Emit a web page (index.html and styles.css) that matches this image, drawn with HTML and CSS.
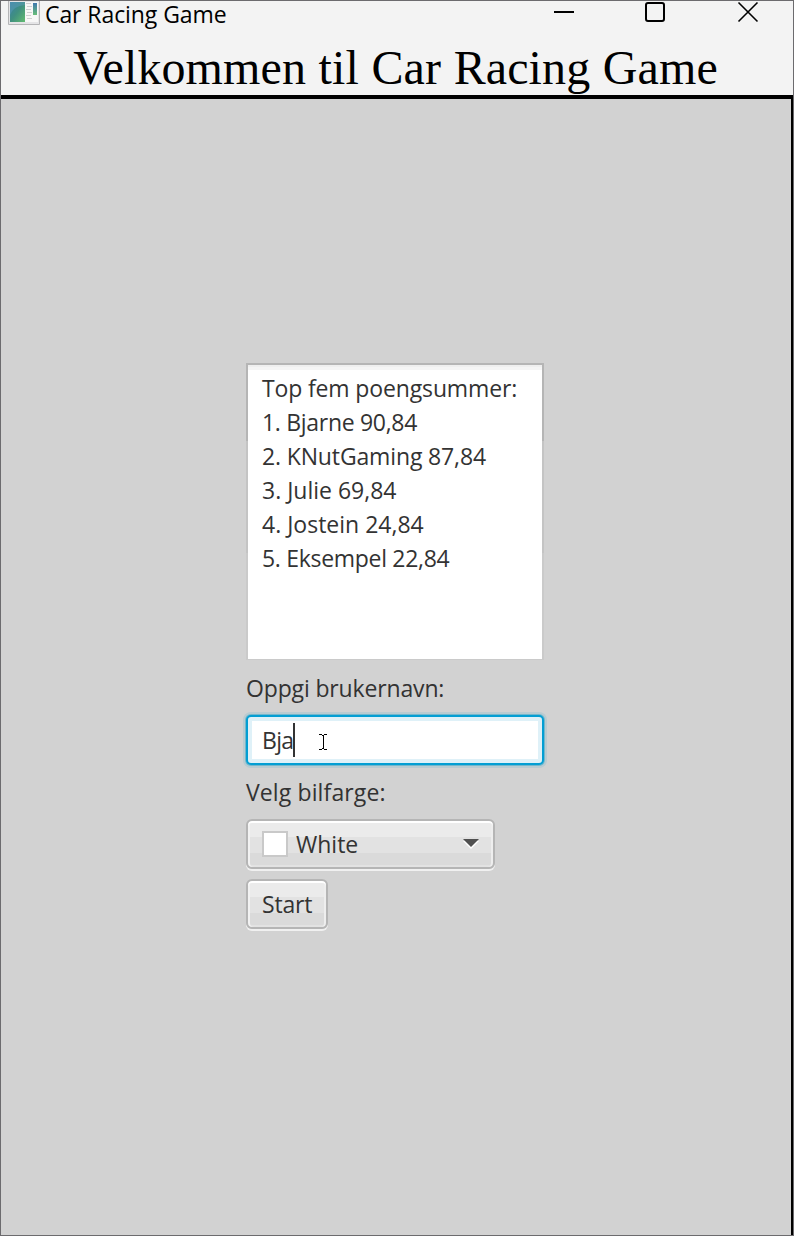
FILE: index.html
```html
<!DOCTYPE html>
<html lang="no">
<head>
<meta charset="utf-8">
<title>Car Racing Game</title>
<link rel="stylesheet" href="styles.css">
</head>
<body>
<div class="window">
  <header class="titlebar">
    <svg class="app-icon" width="32" height="25" viewBox="0 0 32 25">
      <defs>
        <linearGradient id="pane" x1="0" y1="0" x2="1" y2="1"><stop offset="0" stop-color="#397fa9"/><stop offset=".5" stop-color="#409080"/><stop offset="1" stop-color="#62bb70"/></linearGradient>
        <linearGradient id="strip" x1="0" y1="0" x2="0" y2="1"><stop offset="0" stop-color="#4078ae"/><stop offset="1" stop-color="#68bd78"/></linearGradient>
      </defs>
      <path d="M.5 0V23.500H31.500V0" fill="#e4e4e6" stroke="#b4b4b6"/>
      <rect x="2" y="1" width="15" height="20" fill="url(#pane)"/>
      <path d="M2 14Q5 5 17 4V1H2Z" fill="#5b9bb4" opacity=".55"/>
      <rect x="17" y="1" width="13" height="20" fill="#f7f7f7"/>
      <path d="M18 2.500h5M19 5.500h5M18 8.500h5M19 11.500h5M18 14.500h5M19 17.500h5" stroke="#cfcfd1"/>
      <rect x="25" y="2" width="4" height="12" fill="url(#strip)"/>
    </svg>
    <span class="caption">Car Racing Game</span>
    <svg class="controls" width="206" height="25" viewBox="0 0 206 25" fill="none" stroke="#000" stroke-width="2">
      <path d="M1 11H21"/>
      <rect x="93" y="2" width="18" height="18" rx="2"/>
      <path d="M185.500 1.500L204.500 20.500M204.500 1.500L185.500 20.500" stroke-width="1.600"/>
    </svg>
  </header>
  <h1 class="heading">Velkommen til Car Racing Game</h1>
  <main class="scene">
    <div class="scores">
      <div class="snug">Top fem poengsummer:</div>
      <div class="tight">1. Bjarne 90,84</div>
      <div class="snug">2. KNutGaming 87,84</div>
      <div>3. Julie 69,84</div>
      <div>4. Jostein 24,84</div>
      <div class="tight">5. Eksempel 22,84</div>
    </div>
    <div class="label name-label">Oppgi brukernavn:</div>
    <div class="field"><span class="typed">Bja</span><i class="caret"></i>
      <svg class="pointer" width="8" height="16" viewBox="0 0 8 16" fill="none" stroke="#000"><path d="M0 .5H3M5 .5H8M3 1.500H5M4 1V15M3 14.500H5M0 15.500H3M5 15.500H8" shape-rendering="crispEdges"/></svg>
    </div>
    <div class="label color-label">Velg bilfarge:</div>
    <div class="button picker"><i class="swatch"></i><span class="choice">White</span>
      <svg class="arrow" width="16" height="10" viewBox="0 0 16 10"><path d="M0 2H16L8 10Z" fill="#fff"/><path d="M0 0H16L8 8Z" fill="#505050"/></svg>
    </div>
    <div class="button start"><span>Start</span></div>
  </main>
</div>
</body>
</html>
```
FILE: styles.css
```css
* { box-sizing: border-box; }
body { margin: 0; }
.window {
  width: 794px; height: 1236px;
  display: flex; flex-direction: column;
  border: 1px solid #6c6b6e;
  background: #f3f3f3;
  font: 23px/34px "Open Sans", "Noto Sans", sans-serif;
  color: #333;
}
.titlebar { height: 36px; display: flex; align-items: flex-start; padding-left: 7px; color: #000; }
.app-icon { flex: none; }
.caption { margin-left: 5px; line-height: 26px; letter-spacing: -.08px; white-space: nowrap; }
.controls { margin: 0 34px 0 auto; }
.heading {
  margin: 0; height: 58px;
  font: 48px/62px "Liberation Serif", serif;
  letter-spacing: .1px; word-spacing: .5px;
  color: #000; text-align: center; white-space: nowrap;
  padding-right: 3px;
}
.scene {
  flex: 1;
  display: flex; flex-direction: column; align-items: flex-start;
  padding: 264px 0 0 245px;
  background: #d2d2d2;
  border-top: 4px solid #000; border-right: 2px solid #000;
}
.scores {
  width: 298px; height: 297px;
  padding: 6px 0 0 14px;
  border: 2px solid #b5b5b5;
  border-bottom: 1px solid #cacaca;
  border-image: linear-gradient(#b5b5b5 0 78px, #c4c4c4 78px 190px, #cacaca 190px) 2 2 1 2;
  background: linear-gradient(#efefef 0 2px, #f5f5f5 2px 5px, #fff 5px) padding-box;
  white-space: nowrap;
}
.snug { letter-spacing: -.14px; }
.tight { letter-spacing: -.3px; }
.label { height: 34px; }
.name-label { margin-top: 11px; letter-spacing: -.15px; }
.color-label { margin-top: 10px; letter-spacing: .12px; }
.field {
  display: flex; align-items: center;
  margin-top: 10px; width: 298px; height: 50px;
  padding-left: 14px;
  border: 2px solid #039ed3; border-radius: 5px;
  background: #fff;
  box-shadow: 0 0 0 1px #72b7cc, 0 0 0 3px #b9cbd1, inset 0 0 0 4px #dff1f8;
}
.typed { letter-spacing: -.7px; }
.caret { width: 2px; height: 34px; background: #333; }
.pointer { margin-left: 24px; margin-top: 4px; }
.button {
  display: flex; align-items: center;
  height: 50px;
  padding: 0 14px;
  border: 2px solid #b5b5b5; border-radius: 6px;
  background: linear-gradient(#ebebeb 0 16px, #e2e2e2 16px 32px, #dadada 32px) padding-box;
  box-shadow: 0 2px 0 #f0f0f0, inset 0 2px 0 #fff, inset 2px 0 0 #f2f2f2, inset -2px 0 0 #eee, inset 0 -2px 0 #e2e2e2;
}
.picker { width: 249px; margin-top: 10px; }
.swatch { width: 26px; height: 26px; border: 2px solid #c9c9c9; background: #fff; margin-right: 8px; }
.arrow { margin-left: auto; }
.start { width: 82px; margin-top: 10px; letter-spacing: -.2px; }
```
